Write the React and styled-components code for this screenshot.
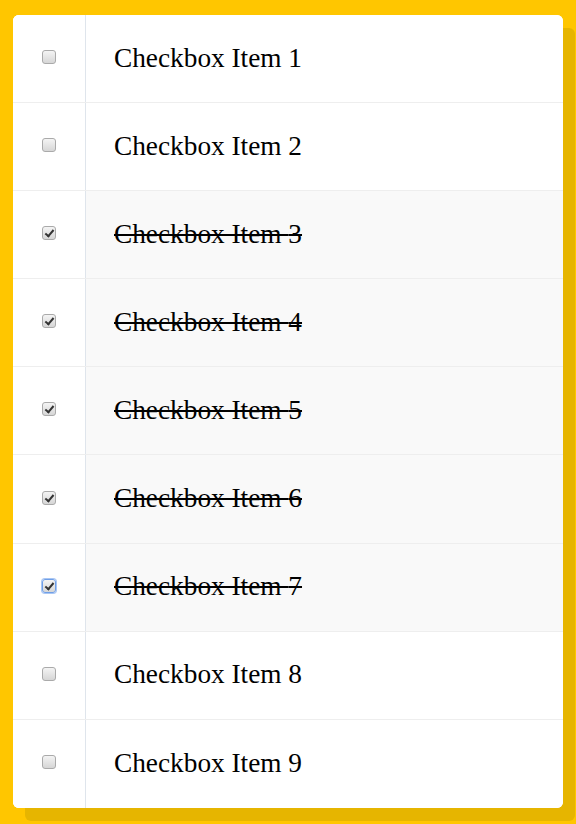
import React, { useState } from "react";
import styled, { createGlobalStyle } from "styled-components";

const GlobalStyle = createGlobalStyle`
	html, body {
		margin: 0;
		background: #ffc600;
	}
	body {
		padding: 15px 13px 16px;
		font-family: "Liberation Serif", "Times New Roman", serif;
	}
`;

const Card = styled.ul`
	list-style: none;
	margin: 0;
	padding: 0;
	background: #fff;
	border-radius: 6px;
	box-shadow: 12px 13px 0 #e6b500;
	overflow: hidden;
`;

const Row = styled.li`
	display: flex;
	height: 88.1px;
	box-sizing: border-box;
	border-bottom: 1px solid #eeeeee;
	background: ${({ done }) => (done ? "#f9f9f9" : "#fff")};

	&:last-child {
		border-bottom: none;
	}
`;

const BoxCell = styled.label`
	flex: 0 0 73px;
	display: flex;
	align-items: center;
	justify-content: center;
	border-right: 1px solid #dfe5ec;
	background: #fff;
	cursor: pointer;
	padding-bottom: 3px;
	box-sizing: border-box;
`;

const Check = styled.input.attrs({ type: "checkbox" })`
	appearance: none;
	margin: 0 0 0 -1px;
	width: 14px;
	height: 14px;
	border-radius: 3px;
	border: 1px solid ${({ focused }) => (focused ? "#6f9fe8" : "#aaaaaa")};
	box-shadow: ${({ focused }) => (focused ? "0 0 0 1px #a9c6f3" : "none")};
	background: linear-gradient(#f4f4f4, #d6d6d6);
	box-sizing: border-box;
	position: relative;
	cursor: pointer;
	outline: none;

	&:checked::after {
		content: "";
		position: absolute;
		left: 4px;
		top: 1px;
		width: 3px;
		height: 7px;
		border: solid #333;
		border-width: 0 2.5px 2.5px 0;
		transform: rotate(40deg);
	}
`;

const Label = styled.span`
	flex: 1;
	display: flex;
	align-items: center;
	padding-left: 28px;
	padding-bottom: 1px;
	font-size: 27.3px;
	color: #000;
	text-decoration: ${({ done }) => (done ? "line-through" : "none")};
`;

const initial = [false, false, true, true, true, true, true, false, false];

export default function App() {
	const [items, setItems] = useState(initial);
	const toggle = (i) =>
		setItems((prev) => prev.map((v, j) => (j === i ? !v : v)));

	return (
		<>
			<GlobalStyle />
			<Card>
				{items.map((done, i) => (
					<Row key={i} done={done}>
						<BoxCell>
							<Check
								checked={done}
								focused={i === 6}
								onChange={() => toggle(i)}
							/>
						</BoxCell>
						<Label done={done}>Checkbox Item {i + 1}</Label>
					</Row>
				))}
			</Card>
		</>
	);
}
